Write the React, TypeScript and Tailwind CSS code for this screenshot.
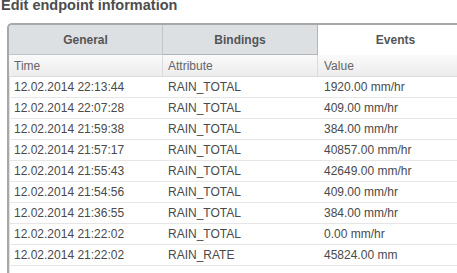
import React from "react";

const rows: [string, string, string][] = [
  ["12.02.2014 22:13:44", "RAIN_TOTAL", "1920.00 mm/hr"],
  ["12.02.2014 22:07:28", "RAIN_TOTAL", "409.00 mm/hr"],
  ["12.02.2014 21:59:38", "RAIN_TOTAL", "384.00 mm/hr"],
  ["12.02.2014 21:57:17", "RAIN_TOTAL", "40857.00 mm/hr"],
  ["12.02.2014 21:55:43", "RAIN_TOTAL", "42649.00 mm/hr"],
  ["12.02.2014 21:54:56", "RAIN_TOTAL", "409.00 mm/hr"],
  ["12.02.2014 21:36:55", "RAIN_TOTAL", "384.00 mm/hr"],
  ["12.02.2014 21:22:02", "RAIN_TOTAL", "0.00 mm/hr"],
  ["12.02.2014 21:22:02", "RAIN_RATE", "45824.00 mm"],
];

export default function App() {
  return (
    <div
      className="w-[457px] h-[273px] overflow-hidden bg-white"
      style={{ fontFamily: '"Liberation Sans", Arial, sans-serif' }}
    >
      <div className="h-[23px] pl-[1px] text-[14.5px] leading-[11px] font-bold text-[#4d4d4d] overflow-visible">
        Edit endpoint information
      </div>
      <div className="ml-[7px] w-[470px] h-[260px] border-l-2 border-t-2 border-[#a8a8a8] rounded-tl-[5px] shadow-[inset_1px_1px_0_#e0e0e0]">
        <div className="grid grid-cols-[154px_155px_1fr] h-[30px] text-[12px] font-bold text-[#555]">
          <div className="flex items-center justify-center bg-[#dde0e3] border-r border-b border-[#c4c4c4] rounded-tl-[3px]">
            General
          </div>
          <div className="flex items-center justify-center bg-[#dde0e3] border-r border-b border-[#b4b4b4]">
            Bindings
          </div>
          <div className="flex items-center justify-center bg-white">
            <span className="pr-[4px]">Events</span>
          </div>
        </div>
        <div className="grid grid-cols-[154px_155px_1fr] h-[22px] text-[12px] text-[#666] bg-gradient-to-b from-[#fafafa] to-[#ececec] border-b border-[#dcdcdc]">
          <div className="flex items-center pl-[5px] border-r border-[#dcdcdc]">Time</div>
          <div className="flex items-center pl-[5px] border-r border-[#dcdcdc]">Attribute</div>
          <div className="flex items-center pl-[6px]">Value</div>
        </div>
        {rows.map((r, i) => (
          <div
            key={i}
            className="grid grid-cols-[154px_155px_1fr] h-[21px] text-[12px] text-[#4a4a4a] border-b border-[#e6e6e6]"
          >
            <div className="flex items-center pl-[5px]">{r[0]}</div>
            <div className="flex items-center pl-[5px]">{r[1]}</div>
            <div className="flex items-center pl-[6px]">{r[2]}</div>
          </div>
        ))}
      </div>
    </div>
  );
}
